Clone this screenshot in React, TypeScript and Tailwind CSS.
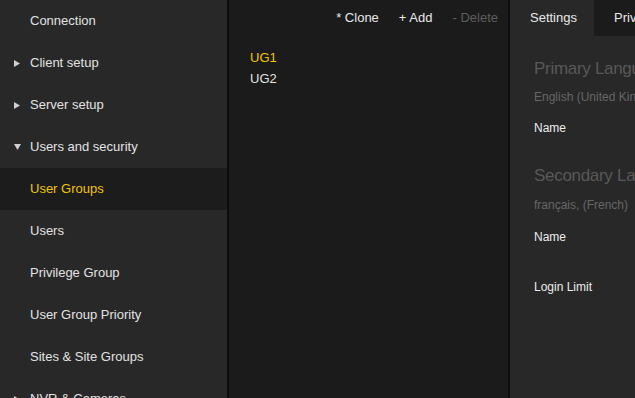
const navItems = [
  { label: "Connection", arrow: "" },
  { label: "Client setup", arrow: "right" },
  { label: "Server setup", arrow: "right" },
  { label: "Users and security", arrow: "down" },
  { label: "User Groups", arrow: "", active: true },
  { label: "Users", arrow: "" },
  { label: "Privilege Group", arrow: "" },
  { label: "User Group Priority", arrow: "" },
  { label: "Sites & Site Groups", arrow: "" },
  { label: "NVR & Cameras", arrow: "right" },
];

const Arrow = ({ dir }: { dir: string }) => {
  if (dir === "right") {
    return (
      <svg width="6" height="7" viewBox="0 0 6 7" className="absolute left-[14px]">
        <polygon points="0,0 6,3.5 0,7" fill="#d0d0d0" />
      </svg>
    );
  }
  if (dir === "down") {
    return (
      <svg width="7" height="6" viewBox="0 0 7 6" className="absolute left-[14px]">
        <polygon points="0,0 7,0 3.5,6" fill="#d0d0d0" />
      </svg>
    );
  }
  return null;
};

export default function App() {
  return (
    <div
      className="flex h-[398px] w-[635px] overflow-hidden bg-[#1b1b1b] text-[13px]"
      style={{ fontFamily: '"Liberation Sans", Arial, sans-serif' }}
    >
      {/* Sidebar */}
      <div className="w-[227px] shrink-0 bg-[#282828] border-r-2 border-[#0c0c0c] box-content">
        {navItems.map((item) => (
          <div
            key={item.label}
            className={`relative flex h-[42px] items-center pl-[30px] ${
              item.active ? "bg-[#1c1c1c] text-[#f2c500]" : "text-[#e2e2e2]"
            }`}
          >
            <Arrow dir={item.arrow} />
            {item.label}
          </div>
        ))}
      </div>

      {/* Group list */}
      <div className="w-[279px] shrink-0 bg-[#1b1b1b] border-r-2 border-[#0c0c0c] box-content">
        <div className="flex h-[36px] items-center justify-end gap-[20px] pr-[10px] text-[#e8e8e8]">
          <span>* Clone</span>
          <span>+ Add</span>
          <span className="text-[#5e5e5e]">- Delete</span>
        </div>
        <div className="pl-[21px] pt-[11px]">
          <div className="h-[21px] leading-[21px] text-[#f2c500]">UG1</div>
          <div className="h-[21px] leading-[21px] text-[#e2e2e2]">UG2</div>
        </div>
      </div>

      {/* Details */}
      <div className="flex-1 min-w-0 bg-[#282828]">
        <div className="flex h-[36px] text-[#e8e8e8]">
          <div className="flex w-[84px] shrink-0 items-center pl-[20px]">Settings</div>
          <div className="flex flex-1 items-center bg-[#1b1b1b] pl-[20px] whitespace-nowrap">
            Privileges
          </div>
        </div>
        <div className="pl-[24px] whitespace-nowrap">
          <div className="mt-[23px] h-[20px] leading-[20px] text-[17px] tracking-[-0.3px] text-[#585858]">
            Primary Language
          </div>
          <div className="mt-[10px] h-[16px] leading-[16px] text-[12px] text-[#666666]">
            English (United Kingdom)
          </div>
          <div className="mt-[15px] h-[16px] leading-[16px] text-[12px] text-[#ececec]">Name</div>
          <div className="mt-[30px] h-[20px] leading-[20px] text-[17px] tracking-[-0.3px] text-[#585858]">
            Secondary Language
          </div>
          <div className="mt-[11px] h-[16px] leading-[16px] text-[12px] text-[#666666]">
            français, (French)
          </div>
          <div className="mt-[16px] h-[16px] leading-[16px] text-[12px] text-[#ececec]">Name</div>
          <div className="mt-[34px] h-[16px] leading-[16px] text-[12px] text-[#ececec]">Login Limit</div>
        </div>
      </div>
    </div>
  );
}
